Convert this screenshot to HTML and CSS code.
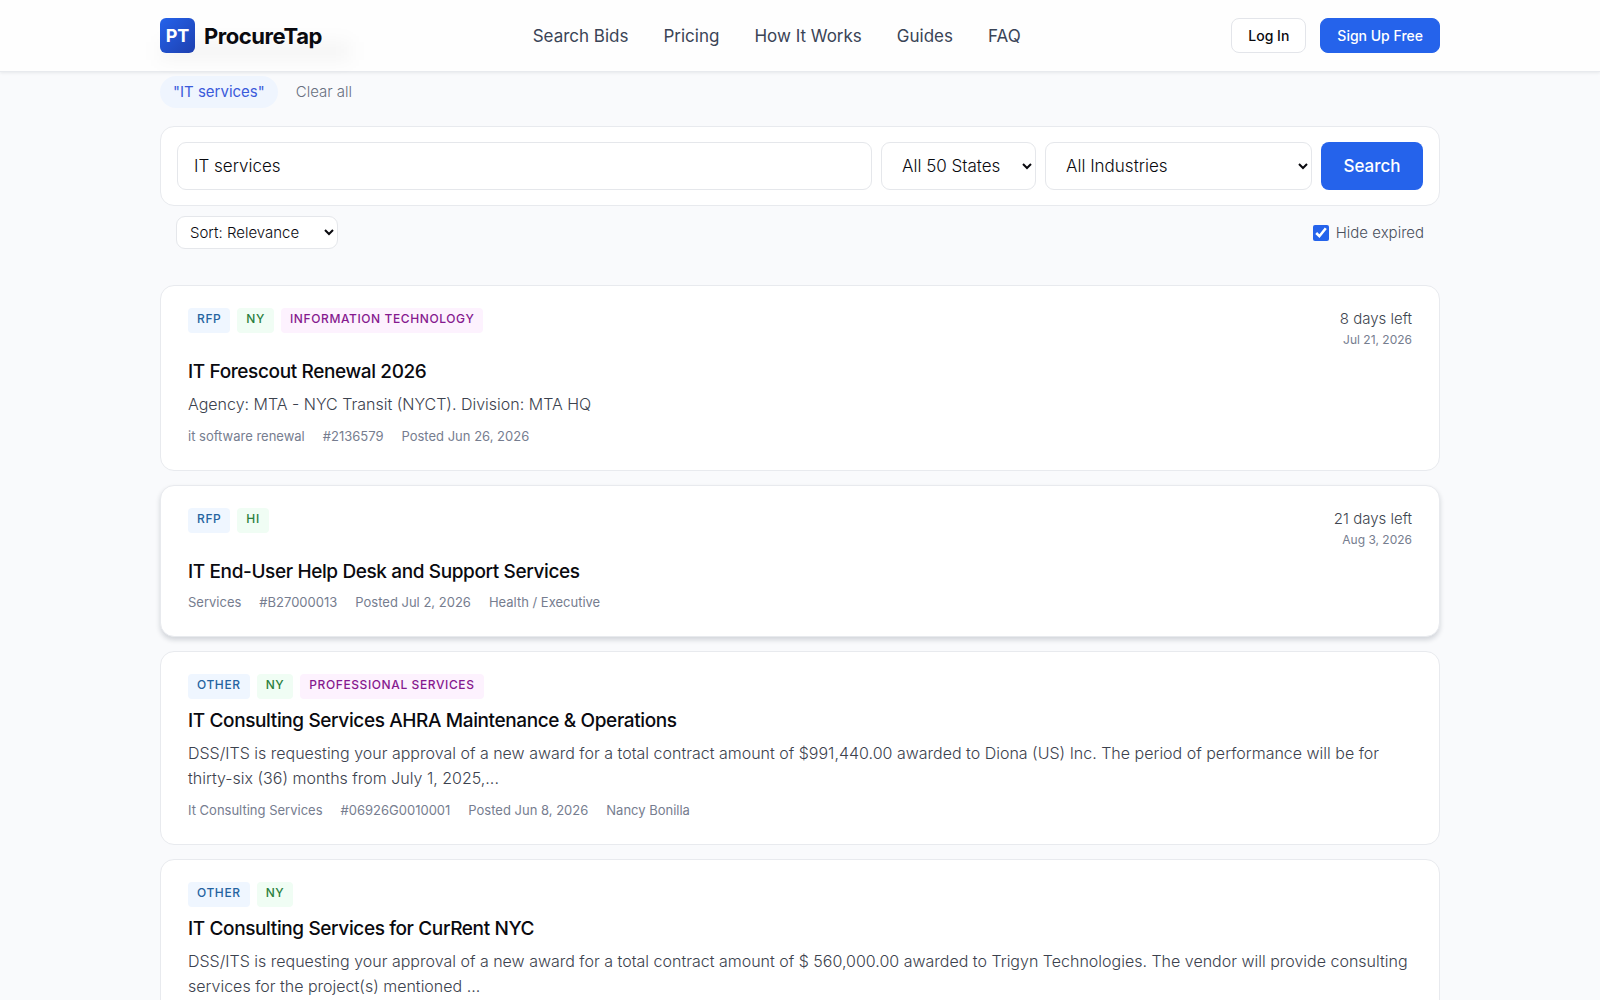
FILE: index.html
```html
<!DOCTYPE html>
<html lang="en">
<head>
<meta charset="utf-8">
<meta name="viewport" content="width=device-width, initial-scale=1">
<title>ProcureTap – Search Bids</title>
<link rel="stylesheet" href="styles.css">
</head>
<body>
<header class="site-header">
  <div class="container header-inner">
    <a class="brand" href="#"><span class="brand-mark">PT</span><span class="brand-name">ProcureTap</span></a>
    <nav class="nav">
      <a href="#">Search Bids</a>
      <a href="#">Pricing</a>
      <a href="#">How It Works</a>
      <a href="#">Guides</a>
      <a href="#">FAQ</a>
    </nav>
    <div class="header-actions">
      <button class="btn btn-outline" type="button">Log In</button>
      <button class="btn btn-primary" type="button">Sign Up Free</button>
    </div>
  </div>
</header>
<main class="container">
  <div class="filters">
    <span class="chip">"IT services"</span>
    <a class="clear" href="#">Clear all</a>
  </div>
  <form>
    <div class="search-card">
      <input class="field query" type="text" value="IT services" aria-label="Search bids">
      <select class="field states" aria-label="State"><option>All 50 States</option></select>
      <select class="field industries" aria-label="Industry"><option>All Industries</option></select>
      <button class="search-btn" type="button">Search</button>
    </div>
    <div class="options">
      <select class="sort" aria-label="Sort order"><option>Sort: Relevance</option></select>
      <label class="expired"><input type="checkbox" checked>Hide expired</label>
    </div>
  </form>
  <section class="results">
    <article class="bid">
      <div class="bid-head">
        <div class="badges"><span class="badge type">RFP</span><span class="badge state">NY</span><span class="badge industry">INFORMATION TECHNOLOGY</span></div>
        <div class="due"><div class="days">8 days left</div><div class="date">Jul 21, 2026</div></div>
      </div>
      <h2 class="title">IT Forescout Renewal 2026</h2>
      <p class="desc">Agency: MTA - NYC Transit (NYCT). Division: MTA HQ</p>
      <div class="meta"><span>it software renewal</span><span>#2136579</span><span>Posted Jun 26, 2026</span></div>
    </article>
    <article class="bid raised">
      <div class="bid-head">
        <div class="badges"><span class="badge type">RFP</span><span class="badge state">HI</span></div>
        <div class="due"><div class="days">21 days left</div><div class="date">Aug 3, 2026</div></div>
      </div>
      <h2 class="title">IT End-User Help Desk and Support Services</h2>
      <div class="meta"><span>Services</span><span>#B27000013</span><span>Posted Jul 2, 2026</span><span>Health / Executive</span></div>
    </article>
    <article class="bid">
      <div class="bid-head">
        <div class="badges"><span class="badge type">OTHER</span><span class="badge state">NY</span><span class="badge industry">PROFESSIONAL SERVICES</span></div>
      </div>
      <h2 class="title">IT Consulting Services AHRA Maintenance &amp; Operations</h2>
      <p class="desc">DSS/ITS is requesting your approval of a new award for a total contract amount of $991,440.00 awarded to Diona (US) Inc. The period of performance will be for <span class="nowrap">thirty-six</span> (36) months from July 1, 2025,...</p>
      <div class="meta"><span>It Consulting Services</span><span>#06926G0010001</span><span>Posted Jun 8, 2026</span><span>Nancy Bonilla</span></div>
    </article>
    <article class="bid">
      <div class="bid-head">
        <div class="badges"><span class="badge type">OTHER</span><span class="badge state">NY</span></div>
      </div>
      <h2 class="title">IT Consulting Services for CurRent NYC</h2>
      <p class="desc">DSS/ITS is requesting your approval of a new award for a total contract amount of $ 560,000.00 awarded to Trigyn Technologies. The vendor will provide consulting services for the project(s) mentioned ...</p>
    </article>
  </section>
</main>
</body>
</html>
```
FILE: styles.css
```css
* { box-sizing: border-box; }
body {
  margin: 0;
  background: #f9fafc;
  color: #0a0a0f;
  font-family: Inter, "Liberation Sans", sans-serif;
  font-size: 16px;
}
a { color: inherit; text-decoration: none; }
button, input, select { font-family: inherit; color: inherit; }
.container { width: 80%; margin: 0 auto; }
.nowrap { white-space: nowrap; }

.site-header {
  position: sticky;
  top: 0;
  z-index: 10;
  background: #fefefe;
  border-bottom: 1px solid #e8eaee;
  box-shadow: 0 1px 3px rgba(15, 23, 42, 0.08);
}
.header-inner {
  display: flex;
  justify-content: space-between;
  align-items: center;
  height: 71px;
}
.brand {
  position: relative;
  display: flex;
  align-items: center;
  gap: 9px;
}
.brand::before {
  content: "";
  position: absolute;
  z-index: -1;
  left: 0;
  top: 24px;
  width: 190px;
  height: 18px;
  background: rgba(0, 0, 0, 0.04);
  filter: blur(9px);
}
.brand-mark {
  display: grid;
  place-items: center;
  width: 35px;
  height: 35px;
  border-radius: 6px;
  background: linear-gradient(135deg, #2563eb, #1e40af);
  color: #fff;
  font-size: 18px;
  font-weight: 700;
}
.brand-name { font-size: 22px; line-height: 24px; font-weight: 700; letter-spacing: -0.02em; }
.nav {
  display: flex;
  gap: 35px;
  color: #3a4456;
  font-size: 17px;
  font-weight: 400;
}
.header-actions { display: flex; gap: 14px; }
.btn {
  height: 35px;
  padding: 0 16px;
  border: 1px solid #e3e5ea;
  border-radius: 8px;
  font-size: 14px;
  font-weight: 500;
}
.btn-outline { background: #fff; }
.btn-primary { background: #2563eb; border-color: #2563eb; color: #fff; }

.filters { display: flex; align-items: center; gap: 18px; padding-top: 4px; }
.chip {
  padding: 6px 13px;
  border-radius: 16px;
  background: #eff5fe;
  color: #3b5bdb;
  font-size: 15px;
  line-height: 20px;
  font-weight: 400;
}
.clear { color: #687080; font-size: 15px; line-height: 20px; font-weight: 300; }

.search-card {
  display: flex;
  gap: 9px;
  margin-top: 18px;
  padding: 15px 16px;
  background: #fff;
  border: 1px solid #e8eaee;
  border-radius: 14px;
}
.field {
  height: 48px;
  padding: 0 16px;
  border: 1px solid #e5e7eb;
  border-radius: 9px;
  background: #fff;
  font-size: 17px;
  font-weight: 300;
}
.query { flex: 1; min-width: 0; }
.states { width: 155px; }
.industries { width: 267px; }
.search-btn {
  width: 102px;
  height: 48px;
  border: 0;
  border-radius: 8px;
  background: #2563eb;
  color: #fff;
  font-size: 17px;
  font-weight: 500;
}
.options {
  display: flex;
  justify-content: space-between;
  align-items: center;
  padding: 10px 16px 0;
}
.sort {
  width: 162px;
  height: 33px;
  padding: 0 9px;
  border: 1px solid #e5e7eb;
  border-radius: 9px;
  background: #fff;
  font-size: 15px;
  font-weight: 300;
}
.expired {
  display: flex;
  align-items: center;
  gap: 7px;
  color: #4a505c;
  font-size: 15px;
  font-weight: 300;
}
.expired input { width: 16px; height: 16px; margin: 0; accent-color: #2563eb; }

.results {
  display: flex;
  flex-direction: column;
  gap: 14px;
  padding: 36px 0 40px;
}
.bid {
  padding: 22px 27px;
  background: #fff;
  border: 1px solid #e8eaee;
  border-radius: 14px;
}
.raised { box-shadow: 0 3px 5px rgba(15, 23, 42, 0.16); }
.bid-head {
  display: flex;
  justify-content: space-between;
  align-items: flex-start;
  margin-bottom: 8px;
}
.badges { display: flex; gap: 7px; }
.badge {
  padding: 3px 9px 6px;
  border-radius: 4px;
  font-size: 12px;
  line-height: 16px;
  font-weight: 500;
  letter-spacing: 0.05em;
}
.type { background: #eff6ff; color: #2563a0; }
.state { background: #f0fdf4; color: #2b803e; }
.industry { background: #fdf2fe; color: #86198f; }
.due { text-align: right; }
.days { color: #40454f; font-size: 15px; line-height: 22px; font-weight: 300; }
.date { color: #767d8f; font-size: 12px; line-height: 20px; }
.title {
  margin: 0 0 6px;
  font-size: 19px;
  line-height: 28px;
  font-weight: 500;
  letter-spacing: -0.02em;
}
.desc {
  margin: 0 0 9px;
  color: #3c424e;
  font-size: 16px;
  line-height: 25px;
  font-weight: 300;
}
.meta {
  display: flex;
  gap: 18px;
  padding-bottom: 1px;
  color: #767d8f;
  font-size: 13px;
  line-height: 21px;
}
```
